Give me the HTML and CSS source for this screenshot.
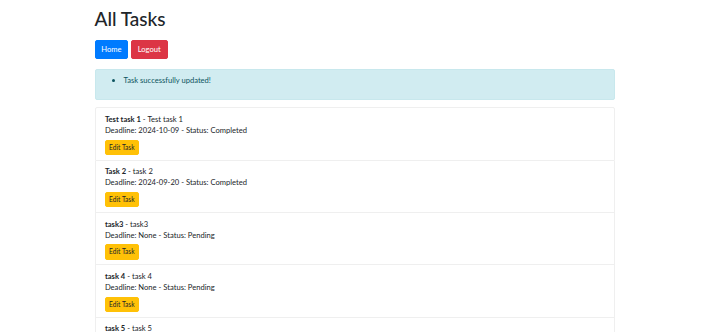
FILE: index.html
```html
<!DOCTYPE html>
<html lang="en">
<head>
    <meta charset="UTF-8">
    <meta name="viewport" content="width=device-width, initial-scale=1.0">
    <title>All Tasks</title>
    <link rel="stylesheet" href="styles.css">
</head>
<body>
    <div class="container">
        <h1>All Tasks</h1>

        <!-- Navigation -->
        <div class="nav-buttons">
            <a href="#" class="btn btn-primary">Home</a>
            <a href="#" class="btn btn-danger">Logout</a>
        </div>

        <!-- Flash messages -->
        <div class="alert alert-info">
            <ul>
                <li>Task successfully updated!</li>
            </ul>
        </div>

        <!-- Task list -->
        <ul class="list-group">
            <li class="list-group-item">
                <strong>Test task 1</strong> - Test task 1<br>
                Deadline: 2024-10-09 - Status: Completed
                <div class="actions"><a href="#" class="btn btn-warning btn-sm">Edit Task</a></div>
            </li>
            <li class="list-group-item">
                <strong>Task 2</strong> - task 2<br>
                Deadline: 2024-09-20 - Status: Completed
                <div class="actions"><a href="#" class="btn btn-warning btn-sm">Edit Task</a></div>
            </li>
            <li class="list-group-item">
                <strong>task3</strong> - task3<br>
                Deadline: None - Status: Pending
                <div class="actions"><a href="#" class="btn btn-warning btn-sm">Edit Task</a></div>
            </li>
            <li class="list-group-item">
                <strong>task 4</strong> - task 4<br>
                Deadline: None - Status: Pending
                <div class="actions"><a href="#" class="btn btn-warning btn-sm">Edit Task</a></div>
            </li>
            <li class="list-group-item">
                <strong>task 5</strong> - task 5<br>
                Deadline: None - Status: Pending
                <div class="actions"><a href="#" class="btn btn-warning btn-sm">Edit Task</a></div>
            </li>
        </ul>
    </div>
</body>
</html>
```

FILE: styles.css
```css
body {
    margin: 0;
    font-family: "Segoe UI", Lato, sans-serif;
    font-size: 7.6px;
    line-height: 11px;
    color: #212529;
    background-color: #fff;
}
.container {
    width: 520px;
    margin: 0 auto;
    padding-top: 7px;
}
h1 {
    font-size: 19px;
    font-weight: 500;
    line-height: 23px;
    margin: 0 0 10px 0;
}
.nav-buttons {
    display: flex;
    gap: 2.5px;
    margin-bottom: 10px;
}
.btn {
    display: inline-block;
    padding: 2.8px 5.8px;
    font-size: 7.6px;
    line-height: 11px;
    border: 1px solid transparent;
    border-radius: 2px;
    text-decoration: none;
    color: #fff;
}
.btn-primary {
    background-color: #007bff;
    border-color: #007bff;
}
.btn-danger {
    background-color: #dc3545;
    border-color: #dc3545;
}
.btn-warning {
    background-color: #ffc107;
    border-color: #ffc107;
    color: #212529;
}
.actions {
    display: flex;
    margin-top: 3.7px;
}
.btn-sm {
    padding: 2px 3.2px;
    font-size: 6.6px;
    line-height: 9.5px;
    border-width: 0.5px;
}
.alert {
    padding: 5.6px 9.4px;
    margin-bottom: 7px;
    border: 1px solid #c8e8ed;
    border-radius: 2px;
}
.alert-info {
    background-color: #d1ecf1;
    color: #0c5460;
}
.alert ul {
    margin: 0 0 7.5px 0;
    padding-left: 18.7px;
}
.list-group {
    list-style: none;
    margin: 0;
    padding: 0;
}
.list-group-item {
    padding: 5.6px 9.4px 4.6px;
    border: 1px solid #efefef;
    border-top: none;
}
.list-group-item:first-child {
    border-top: 1px solid #efefef;
    border-radius: 2px 2px 0 0;
}
```
